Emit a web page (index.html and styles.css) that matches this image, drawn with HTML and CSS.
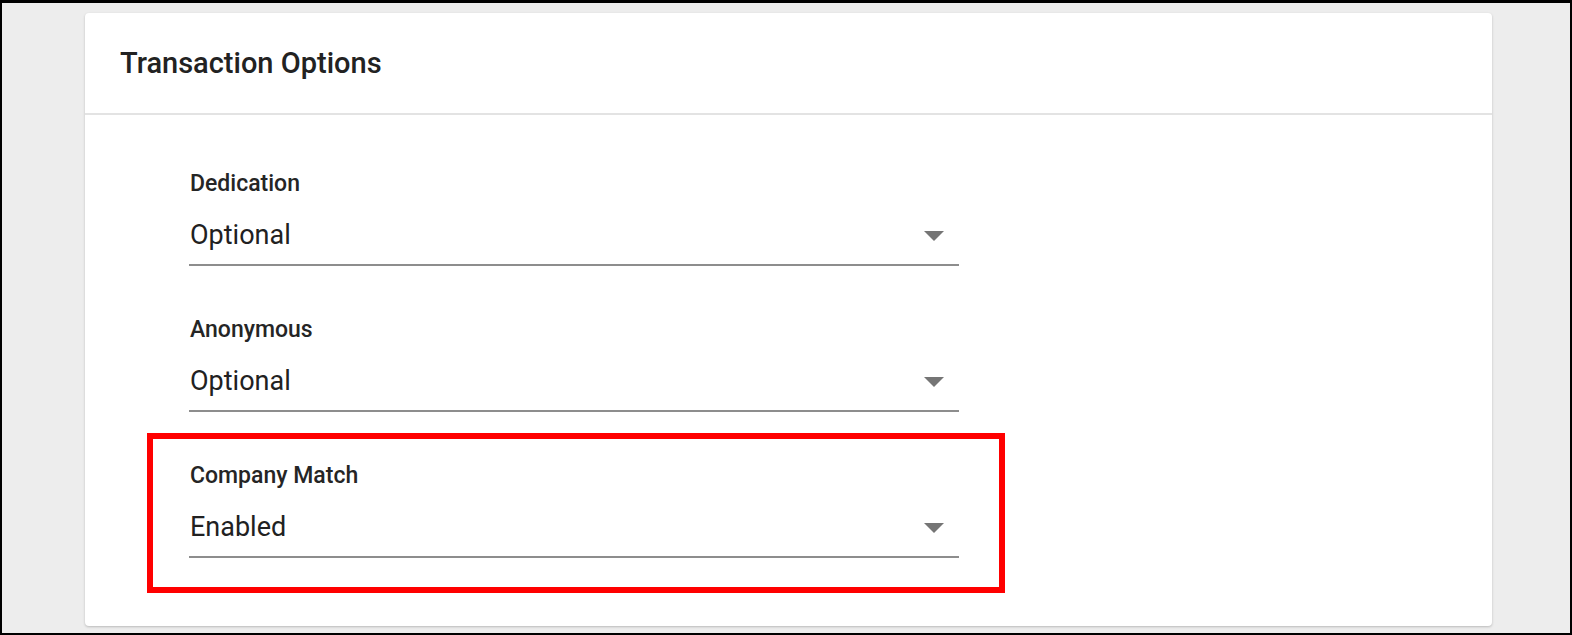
FILE: index.html
```html
<!DOCTYPE html>
<html lang="en">
<head>
<meta charset="utf-8">
<title>Transaction Options</title>
<link rel="stylesheet" href="styles.css">
</head>
<body>
<div class="frame">
  <section class="card">
    <header class="card-header">
      <h2 class="card-title">Transaction Options</h2>
    </header>
    <div class="card-body">
      <div class="field">
        <div class="field-label">Dedication</div>
        <div class="select">
          <span class="select-value">Optional</span>
          <svg class="caret" width="20" height="10" viewBox="0 0 20 10"><polygon points="0,0 20,0 10,10" fill="#757575"/></svg>
        </div>
      </div>
      <div class="field">
        <div class="field-label">Anonymous</div>
        <div class="select">
          <span class="select-value">Optional</span>
          <svg class="caret" width="20" height="10" viewBox="0 0 20 10"><polygon points="0,0 20,0 10,10" fill="#757575"/></svg>
        </div>
      </div>
      <div class="field highlight">
        <div class="field-label">Company Match</div>
        <div class="select">
          <span class="select-value">Enabled</span>
          <svg class="caret" width="20" height="10" viewBox="0 0 20 10"><polygon points="0,0 20,0 10,10" fill="#757575"/></svg>
        </div>
      </div>
    </div>
  </section>
</div>
</body>
</html>
```

FILE: styles.css
```css
* { box-sizing: border-box; }
html, body { margin: 0; padding: 0; }
body {
  font-family: Roboto, "Liberation Sans", Arial, sans-serif;
  color: #212121;
}
.frame {
  width: 1572px;
  height: 635px;
  border: 2px solid #000;
  border-top-width: 3px;
  background: #ededed;
  padding: 10px 0 0 83px;
  overflow: hidden;
}
.card {
  width: 1407px;
  height: 613px;
  background: #fff;
  border-radius: 4px;
  box-shadow: 0 1px 3px rgba(0,0,0,0.12), 0 1px 2px rgba(0,0,0,0.10);
}
.card-header {
  height: 102px;
  border-bottom: 2px solid #e3e3e3;
  display: flex;
  align-items: center;
  padding: 0 35px;
}
.card-title {
  margin: 0;
  font-size: 29px;
  font-weight: 500;
  line-height: 34px;
  color: #222;
}
.card-body {
  padding: 56px 0 0 104px;
  display: flex;
  flex-direction: column;
  gap: 51px;
}
.field {
  width: 770px;
  position: relative;
}
.field-label {
  font-size: 23px;
  font-weight: 500;
  line-height: 26px;
  color: #252525;
  padding-left: 1px;
}
.select {
  margin-top: 23px;
  display: flex;
  align-items: center;
  justify-content: space-between;
  padding: 0 15px 14px 1px;
  border-bottom: 2px solid #8d8d8d;
}
.select-value {
  font-size: 27px;
  line-height: 30px;
  color: #212121;
}
.caret { display: block; margin-top: 2px; }
.highlight::after {
  content: "";
  position: absolute;
  top: -30px;
  left: -42px;
  right: -46px;
  bottom: -35px;
  border: 6px solid #ff0000;
  pointer-events: none;
}
```
